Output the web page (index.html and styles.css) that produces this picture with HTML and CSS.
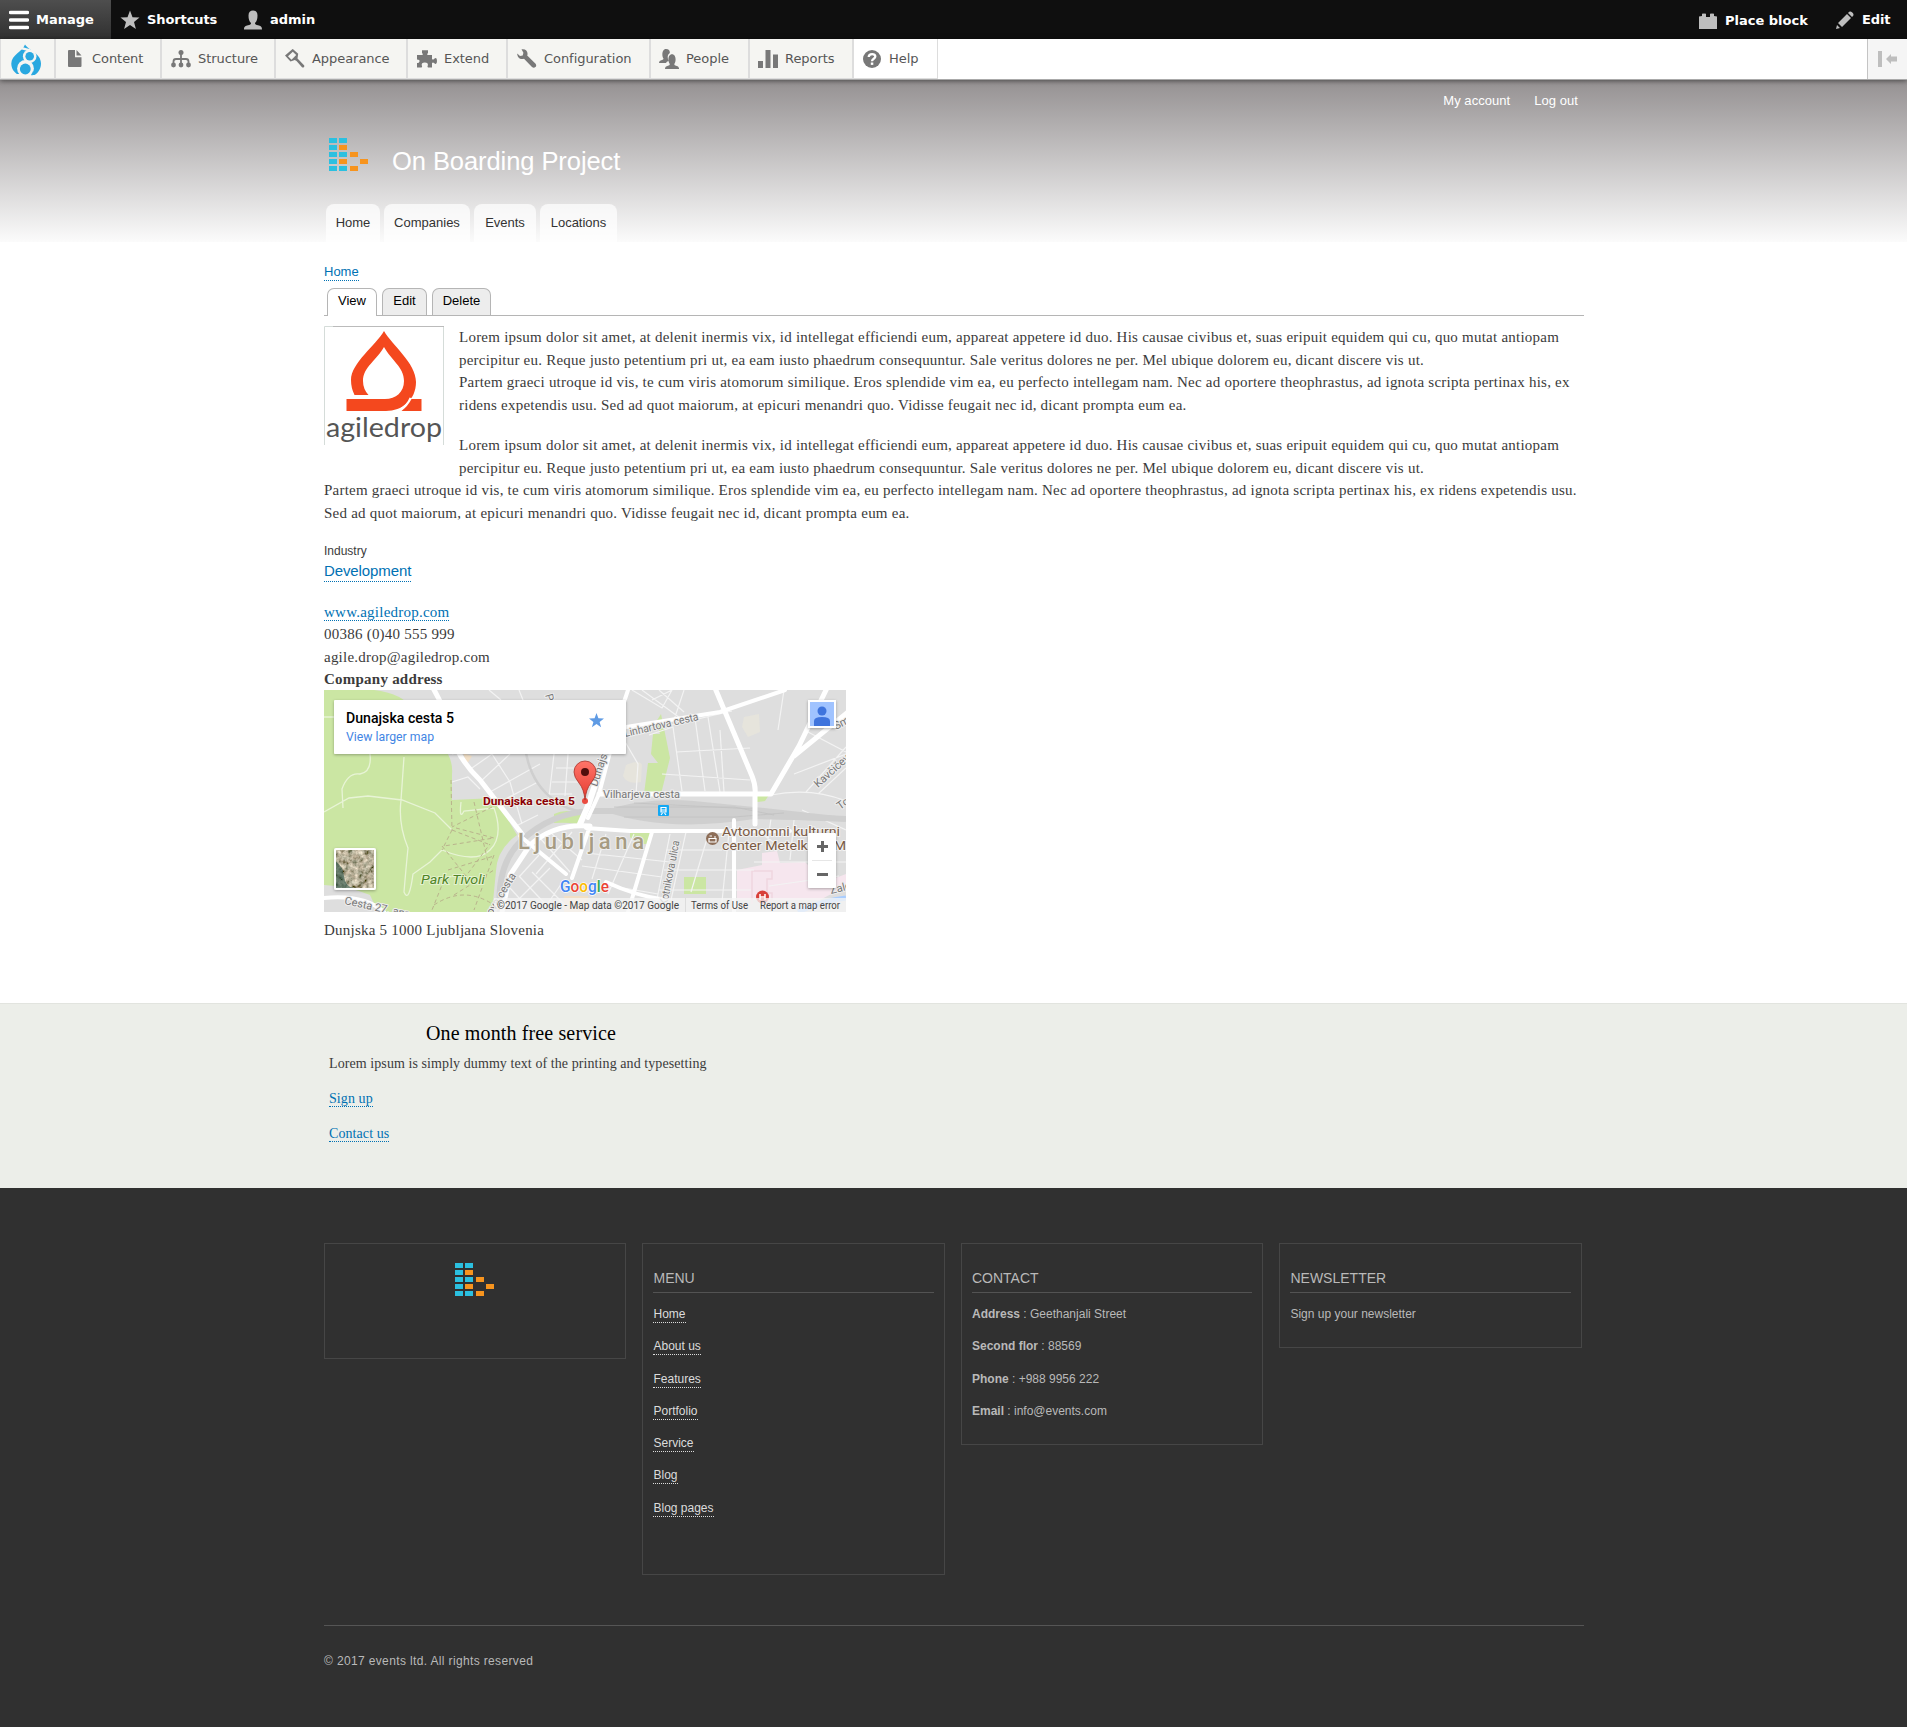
FILE: index.html
```html
<!DOCTYPE html>
<html lang="en">
<head>
<meta charset="utf-8">
<title>Agiledrop | On Boarding Project</title>
<link rel="stylesheet" href="styles.css">
</head>
<body>
<svg width="0" height="0" class="defs">
  <symbol id="brand" viewBox="0 0 39 33">
    <g fill="#2bc0e0"><path d="M0 0h8v5H0zM10 0h8v5h-8zM0 7h8v5H0zM0 14h8v5H0zM10 14h8v5h-8zM0 21h8v5H0zM0 28h8v5H0zM10 28h8v5h-8z"/></g>
    <path fill="#f7941e" d="M10 7h8v5h-8zM21 14h8v5h-8zM10 21h8v5h-8zM31 21h8v5h-8zM21 28h8v5h-8z"/>
  </symbol>
</svg>

<nav class="bar">
  <a class="bar-item bar-manage"><svg width="20" height="20" viewBox="0 0 20 20"><path stroke="#fff" stroke-width="3.4" stroke-linecap="round" d="M1.500 2.500h17M1.500 10h17M1.500 17.500h17"/></svg>Manage</a>
  <a class="bar-item bar-shortcuts"><svg width="20" height="20" viewBox="0 0 20 20"><path fill="#bebebe" d="M10 .5l2.500 6.700 7 .3-5.500 4.400 1.900 7.100-5.900-4-5.900 4 1.900-7.100L.5 7.500l7-.3z"/></svg>Shortcuts</a>
  <a class="bar-item bar-user"><svg width="20" height="20" viewBox="0 0 20 20"><path fill="#bebebe" d="M1 19.500c0-3 1.500-3.600 4-4.200 2-.5 3-.9 3-2.300C6.300 11.500 5.500 9 5.500 5.500 5.500 2 7.300.5 10 .5s4.500 1.500 4.500 5c0 3.500-.8 6-2.500 7.500 0 1.400 1 1.800 3 2.300 2.500.6 4 1.200 4 4.200z"/></svg>admin</a>
  <span class="bar-fill"></span>
  <a class="bar-item bar-place"><svg width="18" height="16" viewBox="0 0 18 16"><path fill="#bebebe" d="M0 16V3.500L3 3V.8Q5 0 7 .8V4h4V.8q2-.8 4 0V3l3 .5V16z"/></svg>Place block</a>
  <a class="bar-item bar-edit"><svg width="18" height="18" viewBox="0 0 18 18"><path fill="#bebebe" d="M13.200.8Q14.500-.2 16 1.200L17 2.300Q18 3.700 17 4.900L16 6 12 2zM11 3l4 4-9 9-4-4zM1 14L4 17 0 18z"/></svg>Edit</a>
</nav>
<nav class="tray">
  <a class="tray-item t-home"><svg width="32" height="32" viewBox="0 0 32 32"><path fill="#29a8e0" d="M15 .5C18.500 6.500 31 9 31 19.500c0 5.500-3 9.500-6.500 11.500H8.500C4 28.500 1.300 24.500 1.300 19.500 1.300 11 13 7 15 .5z"/><path fill="none" stroke="#f5f5f2" stroke-width="2.800" d="M11 4Q15 5 20 6.500"/><circle cx="19.700" cy="12.300" r="6.800" fill="#f5f5f2"/><circle cx="15.500" cy="24.500" r="8.400" fill="#f5f5f2"/><path fill="#f5f5f2" d="M7 30h16v2H7z"/><circle cx="19.700" cy="12.300" r="4.300" fill="#29a8e0"/><circle cx="15.300" cy="25" r="5.400" fill="#29a8e0"/><path fill="none" stroke="#29a8e0" stroke-width="1.600" d="M21.500 31q2-1.200 2-3.500"/></svg></a>
  <a class="tray-item t-content"><svg width="14" height="17" viewBox="0 0 14 17"><path fill="#787878" d="M0 1q0-1 1-1h6v7.200h6.500V16q0 1-1 1H1q-1 0-1-1zM8.500 0l5 5.500h-5z"/></svg>Content</a>
  <a class="tray-item t-structure"><svg width="20" height="18" viewBox="0 0 20 18"><g fill="#787878"><circle cx="10" cy="2.500" r="2.500"/><circle cx="2.500" cy="15" r="2.400"/><circle cx="10" cy="15" r="2.400"/><circle cx="17.500" cy="15" r="2.400"/></g><path fill="none" stroke="#787878" stroke-width="1.800" d="M10 3v12M2.500 14v-2.500Q2.500 9 5 9h10q2.500 0 2.500 2.500V14"/></svg>Structure</a>
  <a class="tray-item t-appearance"><svg width="20" height="20" viewBox="0 0 20 20"><path fill="#787878" fill-rule="evenodd" d="M0 6.500L7 .4q.7-.6 1.400 0l4.800 4.300-.7 4.800 1 1 5.300 5.500q1 1 .2 2t-2 .2L11.500 12l-1.700-1-4.300 1.500zM3 7.200l3.500 3.500 4.700-4.700-3.400-3.200z"/></svg>Appearance</a>
  <a class="tray-item t-extend"><svg width="20" height="18" viewBox="0 0 20 18"><path fill="#787878" d="M0 5h5.500q1-1-.5-2V.3h6V3q-1.500 1-.5 2H15v4q1 1 2 0 3-2.500 3 2t-3 2q-1-1-2 0v4.500h-4q-1-1-.2-2 .7-3-3-3t-3 3q.8 1-.2 2H0v-4.500q2 .3 2.500-1.500T0 9.500z"/></svg>Extend</a>
  <a class="tray-item t-config"><svg width="20" height="19" viewBox="0 0 20 19"><path fill="#787878" d="M4.500.3C9-.6 11.500 3 10.200 6.500l8.400 8.200q1.300 2-.2 3.400-1.700 1.200-3.400-.2L7 9.800C3 11 .3 8.300.2 4.500L3 7l2.700-.6.700-2.600z"/></svg>Configuration</a>
  <a class="tray-item t-people"><svg width="20" height="20" viewBox="0 0 20 20"><path fill="#787878" d="M0 14q0-2.500 3-3 1.500-.3 1.500-1.500C2.500 7 3 0 7 0c3 0 4 1.500 3.800 4C8 6 8.500 9 9.500 12q-2 .5-2.500 2zM6 20q0-2.800 3-3.300 2-.4 1.800-1.700C8.500 12 9 5.300 13 5.300S17.500 12 15.300 15q-.2 1.300 1.800 1.700 3 .5 3 3.300z"/></svg>People</a>
  <a class="tray-item t-reports"><svg width="20" height="18" viewBox="0 0 20 18"><path fill="#787878" d="M0 11h5v7H0zM7.500 0h5v18h-5zM15 4.500h5V18h-5z"/></svg>Reports</a>
  <a class="tray-item t-help"><svg width="18" height="18" viewBox="0 0 18 18"><circle cx="9" cy="9" r="9" fill="#787878"/><path fill="none" stroke="#fff" stroke-width="2.300" d="M5.700 7c.2-4 6.900-3.700 6.600-.3C12.100 8.700 9 8.800 9 11.200"/><path fill="#fff" d="M7.800 12.500h2.500v2.400H7.800z"/></svg>Help</a>
  <span class="bar-fill"></span>
  <a class="tray-toggle"><svg width="19" height="16" viewBox="0 0 19 16"><path fill="#bebebe" d="M0 0h4v16H0zM8 8l5-5v2.500h6v5h-6V13z"/></svg></a>
</nav>

<header class="header">
  <div class="wrap">
    <div class="account"><a>My account</a><a>Log out</a></div>
    <div class="branding"><svg width="39" height="33"><use href="#brand"/></svg><span class="site-name">On Boarding Project</span></div>
    <div class="menu"><a class="m1">Home</a><a class="m2">Companies</a><a class="m3">Events</a><a class="m4">Locations</a></div>
  </div>
</header>

<main class="wrap main">
  <div class="breadcrumb"><a>Home</a></div>
  <div class="tabs"><a class="tab tab-view active">View</a><a class="tab tab-edit">Edit</a><a class="tab tab-delete">Delete</a></div>
  <article class="body">
    <svg class="company-logo" width="120" height="120" viewBox="0 0 120 120">
      <path fill="none" stroke="#d5dcd9" d="M.5 119V.5h119V119"/>
      <path fill="none" stroke="#bbb" d="M9 .5h111"/>
      <path fill="#f4481e" d="M60 5C68 19 92 37 92 56 92 74 78 85 62 85H22.500V73H61C72 73 80 66 80 55 80 41 67 34 60 21 53 34 39 41 39 55Q39 63 44.500 69H30.500Q27 62 27 54C27 37 52 19 60 5z"/>
      <path fill="none" stroke="#fff" stroke-width="3" d="M75 85Q84 80 87 72"/>
      <path fill="#f4481e" d="M77.500 85Q84 80 87.500 73h10v12z"/>
      <text x="2" y="111" class="logo-text" textLength="116" lengthAdjust="spacingAndGlyphs">agiledrop</text>
    </svg>
    <p>Lorem ipsum dolor sit amet, at delenit inermis vix, id intellegat efficiendi eum, appareat appetere id duo. His causae civibus et, suas eripuit equidem qui cu, quo mutat antiopam<br>percipitur eu. Reque justo petentium pri ut, ea eam iusto phaedrum consequuntur. Sale veritus dolores ne per. Mel ubique dolorem eu, dicant discere vis ut.<br>Partem graeci utroque id vis, te cum viris atomorum similique. Eros splendide vim ea, eu perfecto intellegam nam. Nec ad oportere theophrastus, ad ignota scripta pertinax his, ex<br>ridens expetendis usu. Sed ad quot maiorum, at epicuri menandri quo. Vidisse feugait nec id, dicant prompta eum ea.</p>
    <p>Lorem ipsum dolor sit amet, at delenit inermis vix, id intellegat efficiendi eum, appareat appetere id duo. His causae civibus et, suas eripuit equidem qui cu, quo mutat antiopam<br>percipitur eu. Reque justo petentium pri ut, ea eam iusto phaedrum consequuntur. Sale veritus dolores ne per. Mel ubique dolorem eu, dicant discere vis ut.<br>Partem graeci utroque id vis, te cum viris atomorum similique. Eros splendide vim ea, eu perfecto intellegam nam. Nec ad oportere theophrastus, ad ignota scripta pertinax his, ex ridens expetendis usu.<br>Sed ad quot maiorum, at epicuri menandri quo. Vidisse feugait nec id, dicant prompta eum ea.</p>
    <div class="industry"><div class="label">Industry</div><a>Development</a></div>
    <div class="contact-lines"><div><a>www.agiledrop.com</a></div><div>00386 (0)40 555 999</div><div>agile.drop@agiledrop.com</div><div><b>Company address</b></div></div>
    <svg class="map" width="522" height="222" viewBox="0 0 522 222">
      <defs>
        <filter id="sh" x="-10%" y="-20%" width="120%" height="150%"><feDropShadow dx="0" dy="1" stdDeviation="1.500" flood-opacity=".3"/></filter>
        <filter id="noise" x="0" y="0" width="100%" height="100%"><feTurbulence type="fractalNoise" baseFrequency=".2" numOctaves="4" seed="4"/><feColorMatrix values="1.300 0 0 0 -.18  1.150 .1 0 0 -.2  1 .1 0 0 -.24  0 0 0 0 1"/></filter>
        <linearGradient id="pin" x2="0" y2="1"><stop offset="0" stop-color="#ff7569"/><stop offset="1" stop-color="#e53a30"/></linearGradient>
      </defs>
      <path fill="#dedede" d="M0 0h522v222H0z"/>
      <path fill="#cbe6a3" d="M0 0h50q28 3 40 20l34 44q5 10 4 20v26l43-2 22 37q-20 14-21 36l-4 41H54l-8-17q-22-9-46-10zM327 64l2-20h7l-4-12 5-8 5 24 4 20-9 36h-17l4-31h10zM230 124q12-6 28 0l-4 10q-12-2-24-1zM433 105h12l-4 6-8 1zM306 143h22l-4 11q-12 1-18-7zM360 187h22v17h-22z"/>
      <path fill="#f6e6ee" d="M413 180l25-5v-12l15-2 3 12 25-1 20 20 21-8v12l-26 14h-83z"/>
      <path fill="#e6e4dc" d="M420 27l15-3 1 18-12 5-6-10zM302 75q14-6 16 0l-1 17q-14 3-18-6z"/>
      <path fill="#f1dfc6" d="M139 63l9 3-5 8zM240 206h24v16h-24z"/>
      <path fill="none" stroke="#aaceff" stroke-width="5" d="M474 222q26-12 48-14"/>
      <path fill="none" stroke="#f0d6e0" stroke-width="1.500" d="M428 214v-33h20v8h-5v14h5v7h-12"/>
      <!-- park trails -->
      <path fill="none" stroke="#e8f4d6" stroke-width="1.300" d="M0 27h12M46 64q2 18-10 20-12-2-18 15l1 19M0 122l25-14 19-2 34 4 33 13 17 17M80 67l-3 43q-3 24 7 48-2 20-4 44 5 12 9-18l17-12 12-12M118 160q34 14 48 0t4-42l-30 3q-5 10-3-9"/>
      <g fill="none" stroke="#b9b38c" stroke-width="1" stroke-dasharray="4 3"><path d="M127 90l1 50M150 112l14 60M168 117l-40 20M128 140l-10 20M128 140l36 14M132 138l38 10-50 8M118 156l24 30 24-32M124 180l46-14M170 165l-20 55M120 190l-12 30M130 205l40-25M110 215q30-20 60 0"/></g>
      <!-- minor streets -->
      <g fill="none" stroke="#f3f3f3" stroke-width="1.200"><path d="M128 64l29-8M148 78l20-14M156 92l30-28M166 102l50-28M176 112l38-20M168 64l18 28 12 42M128 92l16-5 12 12M190 137l24-12M165 0l12 10M195 0l4 10M230 64l-6 52M244 64l-3 42M232 78h24M228 92h26M224 104h24M308 0l30 18 10-18M318 0l38 28M335 0l25 22M360 0l-10 30M328 10l20-10M300 50l14 24-2 30M325 45l24-8 9 64M348 35l60-14M352 62l74-4M338 84l88 6M371 28l10 73M396 40l4 62M384 27l12 75M460 0l-6 40M484 42l38 20M470 84l52-20M482 102l40-45M494 104l28-26M447 105q40-8 75 6M478 120l44 20M362 142l-15 68M385 142l-18 60M405 142l-8 80M342 160h56M340 180h90M335 200h92M310 144l-26 60M346 144l-14 70M282 144l-14 45M262 163l84 9M258 176l80 11M288 196l46 8M216 148l30 34M228 144l30 26M248 142l-36 42M215 165l-20 22M226 178l-30 30M240 190l-18 26M195 186l30 32M186 198l20 22M208 182l34 34M435 142l20 14h67M448 122l-5 34M470 130l-4 40M500 140l-5 30M430 172h92M445 196l70-10"/></g>
      <!-- railway -->
      <path fill="none" stroke="#cfcfcf" stroke-width="6" d="M176 222q-4-48 22-72 30-27 68-29h60l196 8"/>
      <path fill="#cfcfcf" d="M280 121q40-14 90-10l60 6 92 10v4l-92-2q-90 14-150-8z"/>
      <path fill="none" stroke="#c2c2c2" stroke-width=".8" d="M290 117h120l40 8M300 127h110l50-4M310 113l120 6"/>
      <path fill="none" stroke="#cfcfcf" stroke-width="2.500" d="M200 40q0 48 30 70 14 11 32 12"/>
      <!-- main roads -->
      <g fill="none" stroke="#fff" stroke-linecap="round" stroke-linejoin="round"><path stroke-width="5" d="M109-2q12 20 17 45 9 27 30 47l42 54M178 222l8-37 20-30q24-22 60-19M391-2l37 88q4 10 3 18v30M275 104h172l28-48 28-58M470 66l54-44"/><path stroke-width="4" d="M262 138l44 3h160M328 142l-24 80M266 136l-18 52M264 128l11-24 21-80 8-24M296 38l100-16 65-22M410 130v92M196 146l46 38M0 208q40-4 60 14M282 192q30 14 60 18"/><path stroke-width="6" d="M256 134l8-18 8-24"/></g>
      <!-- street and place names -->
      <g class="street">
        <text transform="translate(301 47) rotate(-13)" textLength="76" lengthAdjust="spacingAndGlyphs">Linhartova cesta</text>
        <text x="279" y="108" textLength="77" lengthAdjust="spacingAndGlyphs">Vilharjeva cesta</text>
        <text transform="translate(273 97) rotate(-72)">Dunajska</text>
        <text transform="translate(494 98) rotate(-42)">Kavčičeva</text>
        <text transform="translate(512 40) rotate(-28)">Smart</text>
        <text transform="translate(516 120) rotate(-35)">Topniška</text>
        <text transform="translate(343 216) rotate(-79)" textLength="66" lengthAdjust="spacingAndGlyphs">Kotnikova ulica</text>
        <text transform="translate(168 226) rotate(-59)">ova cesta</text>
        <text transform="translate(20 214) rotate(12)">Cesta 27. apr.</text>
        <text transform="translate(507 204) rotate(-14)">Zaloška</text>
        <text transform="translate(221 5) rotate(75)">Pa</text>
      </g>
      <text x="194" y="159" class="city" textLength="126">Ljubljana</text>
      <text x="97" y="194" class="park" textLength="64" lengthAdjust="spacingAndGlyphs">Park Tivoli</text>
      <g class="poi"><text x="398" y="146" textLength="118" lengthAdjust="spacingAndGlyphs">Avtonomni kulturni</text><text x="398" y="160" textLength="124" lengthAdjust="spacingAndGlyphs">center Metelkova M</text></g>
      <circle cx="388.500" cy="148.500" r="6.500" fill="#8d6e58"/><path fill="none" stroke="#fff" stroke-width="1.200" d="M385 148.500h7v3.500h-7zM385.500 146h2.500M390 147h2"/>
      <rect x="334" y="115" width="11" height="11" rx="1" fill="#12a8f4"/><path fill="none" stroke="#fff" stroke-width="1.200" d="M337 117.500h5v4.500h-5zM337 120h5M337 125l1.500-2M342 125l-1.500-2"/>
      <circle cx="438.500" cy="207" r="6.500" fill="#d8403a"/><path stroke="#fff" stroke-width="1.500" d="M436 204v6M441 204v6M436 207h5"/>
      <text x="159" y="115" class="pin-label" textLength="92" lengthAdjust="spacingAndGlyphs">Dunajska cesta 5</text>
      <circle cx="261" cy="111" r="3" fill="#ea4b40"/>
      <path fill="url(#pin)" stroke="#a8332b" stroke-width=".8" d="M261 110q-1-11-6-17-5-6-5-11a11 11 0 0 1 22 0q0 5-5 11-5 6-6 17z"/><circle cx="261" cy="82" r="4" fill="#500e0c"/>
      <!-- overlays -->
      <g filter="url(#sh)"><rect x="10" y="10" width="292" height="54" rx="1" fill="#fff"/><rect x="10" y="158" width="42" height="42" rx="2" fill="#fff"/><rect x="484" y="10" width="28" height="28" fill="#fff"/></g>
      <text x="22" y="33" class="card-title" textLength="108" lengthAdjust="spacingAndGlyphs">Dunajska cesta 5</text>
      <text x="22" y="51" class="card-link" textLength="88" lengthAdjust="spacingAndGlyphs">View larger map</text>
      <path fill="#5f9be4" d="M272.500 23l1.900 5.200 5.600.2-4.400 3.500 1.500 5.300-4.600-3.100-4.600 3.100 1.500-5.300-4.400-3.500 5.600-.2z"/>
      <rect x="12" y="160" width="38" height="38" filter="url(#noise)"/><path fill="#1f4a3f" fill-opacity=".55" d="M12 172q7 4 8 14t9 12H12z"/>
      <path fill="#a0c3ff" d="M486 12h24v24h-24z"/><circle cx="498" cy="21" r="4.500" fill="#3f74dd"/><path fill="#3f74dd" d="M490 36v-5q0-4 8-4t8 4v5z"/>
      <g class="google"><text x="236" y="202" textLength="49" lengthAdjust="spacingAndGlyphs"><tspan fill="#4285f4">G</tspan><tspan fill="#ea4335">o</tspan><tspan fill="#fbbc05">o</tspan><tspan fill="#4285f4">g</tspan><tspan fill="#34a853">l</tspan><tspan fill="#ea4335">e</tspan></text></g>
      <path fill="#f5f5f5" fill-opacity=".75" d="M170 208h352v14H170z"/><path stroke="#ddd" d="M361.500 208v14"/>
      <g class="attrib"><text x="173" y="219" textLength="182" lengthAdjust="spacingAndGlyphs">©2017 Google - Map data ©2017 Google</text><text x="367" y="219" textLength="57" lengthAdjust="spacingAndGlyphs">Terms of Use</text><text x="436" y="219" textLength="80" lengthAdjust="spacingAndGlyphs">Report a map error</text></g>
      <rect x="484" y="143" width="28" height="55" rx="1" fill="#fff" filter="url(#sh)"/>
      <path fill="none" stroke="#666" stroke-width="3" d="M493 156.500h11M498.500 151v11M493 184.500h11"/><path stroke="#e6e6e6" d="M488 170.500h20"/>
    </svg>
    <div class="address">Dunjska 5 1000 Ljubljana Slovenia</div>
  </article>
</main>

<section class="featured">
  <div class="wrap">
    <div class="promo">
      <h2>One month free service</h2>
      <p>Lorem ipsum is simply dummy text of the printing and typesetting</p>
      <p><a>Sign up</a></p>
      <p><a>Contact us</a></p>
    </div>
  </div>
</section>

<footer class="footer">
  <div class="wrap">
    <div class="columns">
      <div class="box box-logo"><svg width="39" height="33"><use href="#brand"/></svg></div>
      <div class="box box-menu"><h3>MENU</h3><p><a>Home</a></p><p><a>About us</a></p><p><a>Features</a></p><p><a>Portfolio</a></p><p><a>Service</a></p><p><a>Blog</a></p><p><a>Blog pages</a></p></div>
      <div class="box box-contact"><h3>CONTACT</h3><p><b>Address</b> : Geethanjali Street</p><p><b>Second flor</b> : 88569</p><p><b>Phone</b> : +988 9956 222</p><p><b>Email</b> : info@events.com</p></div>
      <div class="box box-news"><h3>NEWSLETTER</h3><p>Sign up your newsletter</p></div>
    </div>
    <div class="copyright">© 2017 events ltd. All rights reserved</div>
  </div>
</footer>
</body>
</html>
```
FILE: styles.css
```css
* { box-sizing: border-box; }
body { margin: 0; background: #fff; color: #3b3b3b; font-family: "Liberation Sans", Arial, sans-serif; font-size: 14px; }
svg { display: block; flex: none; }
.defs { position: absolute; }
p, h2, h3 { margin: 0; font-weight: 400; }
.wrap { width: 1260px; margin-left: 324px; }

/* admin toolbar */
.bar { display: flex; height: 39px; background: #0f0f0f; color: #fff; font: bold 13px/39px "DejaVu Sans", sans-serif; }
.bar-item { display: flex; align-items: center; white-space: nowrap; }
.bar-manage { width: 111px; padding-left: 9px; gap: 7px; background: linear-gradient(#4e4e4e, #303030); }
.bar-shortcuts { width: 122px; padding-left: 9px; gap: 7px; letter-spacing: -.1px; }
.bar-user { padding-left: 10px; gap: 7px; }
.bar-fill { flex: 1; }
.bar-place { width: 137px; gap: 8px; padding-top: 2px; line-height: 37px; }
.bar-edit { width: 71px; gap: 8px; letter-spacing: -.1px; }
.tray { position: relative; display: flex; height: 41px; background: #fff; border-bottom: 1px solid #aaa; box-shadow: 0 1px 5px rgba(0, 0, 0, .5); color: #565656; font: 13px/38px "DejaVu Sans", sans-serif; letter-spacing: -.05px; }
.tray-item { display: flex; align-items: center; padding-top: 1px; white-space: nowrap; background: #f5f5f2; border: solid #ddd; border-width: 0 1px 1px; }
.tray-item svg { margin-top: -1px; }
.t-home { width: 55px; padding-left: 9px; padding-top: 3px; }
.t-content { width: 106px; padding-left: 12px; gap: 10px; }
.t-structure { width: 114px; padding-left: 9px; gap: 7px; }
.t-appearance { width: 132px; padding-left: 9px; gap: 7px; }
.t-extend { width: 100px; padding-left: 9px; gap: 7px; }
.t-config { width: 143px; padding-left: 9px; gap: 7px; }
.t-people { width: 99px; padding-left: 8px; gap: 7px; }
.t-reports { width: 104px; padding-left: 8px; gap: 7px; }
.t-help { width: 85px; padding-left: 9px; gap: 8px; background: #fff; }
.tray-toggle { display: flex; align-items: center; width: 40px; padding-left: 10px; border-left: 1px solid #c4c4c4; background: #f5f5f5; }

/* site header */
.header { height: 162px; padding-top: 11px; background: linear-gradient(#959192, #fbfbfb); }
.account { display: flex; justify-content: flex-end; gap: 24px; height: 20px; padding-right: 6px; color: #fff; font-size: 13px; line-height: 20px; letter-spacing: .05px; }
.branding { display: flex; height: 66px; margin: 27px 0 0 5px; }
.site-name { padding: 8px 0 0 24px; color: #fff; font-size: 25.500px; line-height: 30px; letter-spacing: -.07px; }
.menu { display: flex; gap: 4px; height: 38px; padding-left: 2px; font-size: 13px; line-height: 38px; text-align: center; }
.menu a { border-radius: 8px 8px 0 0; background: rgba(255, 255, 255, .7); color: #333; }
.m1 { width: 54px; } .m2 { width: 86px; } .m3 { width: 62px; } .m4 { width: 77px; }

/* content */
.main { padding-top: 20px; height: 761px; }
.main a, .featured a { color: #0071b3; border-bottom: 1px dotted #0071b3; }
.breadcrumb { height: 26px; font-size: 13px; line-height: 20px; }
.breadcrumb a { padding-bottom: 1px; }
.main .tabs { display: flex; gap: 5px; height: 28px; padding-left: 3px; margin-bottom: 10px; border-bottom: 1px solid #b5b5b5; }
.main .tab { height: 27px; border: 1px solid #b5b5b5; border-bottom: 0; border-radius: 7px 7px 0 0; background: #ededed; color: #000; font-size: 13px; line-height: 24px; text-align: center; }
.main .tab.active { height: 28px; background: #fff; }
.tab-view { width: 50px; } .tab-edit { width: 45px; } .tab-delete { width: 59px; }
.body { font: 15px/22.500px "Liberation Serif", "Times New Roman", serif; letter-spacing: .233px; white-space: nowrap; }
.body p { margin-bottom: 18px; }
.company-logo { float: left; margin: 0 15px 33px 0; }
.logo-text { font: 27px "Lato", sans-serif; fill: #555; letter-spacing: 0; }
.industry { clear: both; font: 15px/22px "Liberation Sans", Arial, sans-serif; letter-spacing: -.1px; margin-bottom: 18.500px; }
.industry a { padding-bottom: 2px; }
.label { font-size: 12px; line-height: 18px; letter-spacing: 0; }
.contact-lines { height: 89.500px; }
.map { margin-bottom: 7px; font-family: Roboto, sans-serif; letter-spacing: 0; }
.street { font-size: 11px; fill: #777; stroke: #eee; stroke-width: 2px; paint-order: stroke; }
.city { font-size: 22px; font-weight: 500; fill: #a69b82; stroke: #eee; stroke-width: 2px; paint-order: stroke; }
.park { font-size: 13px; font-style: italic; fill: #4f8426; stroke: #e4f2ce; stroke-width: 2px; paint-order: stroke; }
.poi { font-size: 13.500px; fill: #7a5a44; stroke: #f2f2f2; stroke-width: 2px; paint-order: stroke; }
.pin-label { font-size: 11.500px; font-weight: 700; fill: #8b0006; stroke: #f0eee4; stroke-width: 2px; paint-order: stroke; }
.card-title { font-size: 14px; font-weight: 500; fill: #000; }
.card-link { font-size: 12px; fill: #4285e4; }
.google { font: 500 17px Roboto, sans-serif; stroke: #fff; stroke-width: 1.500px; paint-order: stroke; }
.attrib { font-size: 10px; fill: #444; }

/* featured band */
.featured { height: 185px; padding-top: 17px; border-top: 1px solid #e2e4df; background: #eceee9; font: 14px/21px "Liberation Serif", "Times New Roman", serif; }
.promo { width: 384px; margin-left: 5px; white-space: nowrap; }
.promo h2 { margin-bottom: 8px; color: #000; font-size: 20px; line-height: 24px; letter-spacing: .13px; text-align: center; }
.promo p { margin-bottom: 14px; letter-spacing: .08px; }

/* footer */
.footer { height: 539px; padding-top: 55px; background: #303030; color: #b9b9b9; font-size: 12px; line-height: 18px; }
.columns { display: flex; align-items: flex-start; gap: 16.200px; height: 382px; }
.box { width: 302.300px; padding: 24px 10px 0; border: 1px solid #464646; }
.box-logo { display: flex; justify-content: center; height: 116px; padding: 19px 12px 0 10px; }
.box-menu { height: 332px; }
.box-contact { height: 202px; }
.box-news { height: 105px; }
.box h3 { height: 25px; margin-bottom: 12px; border-bottom: 1px solid #535353; font-size: 14px; line-height: 21px; }
.box p { margin-bottom: 14.300px; }
.box a { padding-bottom: 1px; color: #dcdcdc; border-bottom: 1px dotted #dcdcdc; }
.copyright { padding-top: 26px; border-top: 1px solid #555; letter-spacing: .36px; }
```
